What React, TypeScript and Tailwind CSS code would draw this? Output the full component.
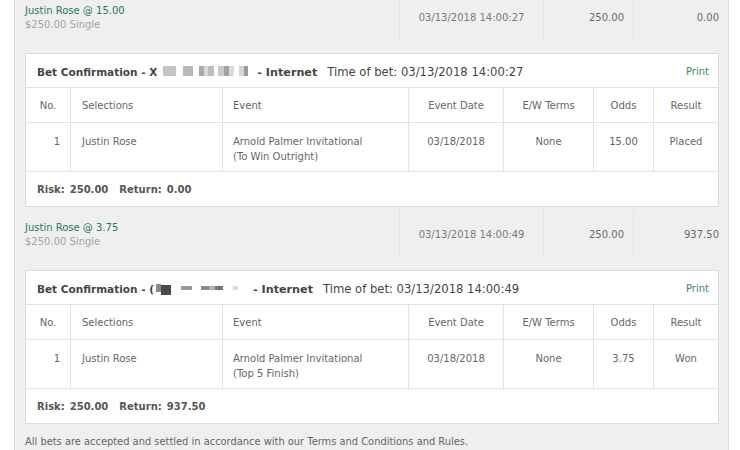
import React from 'react'

type Bet = {
  odds: string
  placed: string
  stake: string
  ret: string
  eventLine: string
  result: string
  redact: React.ReactNode
}

const COLS = 'grid grid-cols-[45px_152px_186px_95px_90px_60px_64px]'

function RedactA() {
  return (
    <span className="inline-flex items-center gap-0 align-middle">
      <span className="ml-[6px] inline-block h-[10px] w-[13px] bg-[#c4c4c4]" />
      <span className="ml-[7px] inline-block h-[10px] w-[10px] bg-[#b8b8b8]" />
      <span className="ml-[6px] inline-block h-[10px] w-[5px] bg-[#a9a9a9]" />
      <span className="inline-block h-[10px] w-[4px] bg-[#d8d8d8]" />
      <span className="inline-block h-[10px] w-[6px] bg-[#bdbdbd]" />
      <span className="ml-[4px] inline-block h-[10px] w-[6px] bg-[#c9c9c9]" />
      <span className="inline-block h-[10px] w-[5px] bg-[#a2a2a2]" />
      <span className="inline-block h-[10px] w-[5px] bg-[#dadada]" />
      <span className="ml-[5px] inline-block h-[10px] w-[5px] bg-[#d6d6d6]" />
      <span className="inline-block h-[10px] w-[4px] bg-[#9c9c9c]" />
      <span className="ml-[9px]" />
    </span>
  )
}

function RedactB() {
  return (
    <span className="inline-flex items-center align-middle">
      <span className="ml-[2px] inline-block h-[8px] w-[5px] bg-[#8a8a8a]" />
      <span className="inline-block h-[10px] w-[10px] translate-y-[2px] bg-[#4a4a4a]" />
      <span className="ml-[10px] inline-block h-[4px] w-[11px] bg-[#9a9a9a]" />
      <span className="ml-[9px] inline-block h-[4px] w-[8px] bg-[#8a8a8a]" />
      <span className="inline-block h-[4px] w-[6px] bg-[#b0b0b0]" />
      <span className="inline-block h-[4px] w-[8px] bg-[#777]" />
      <span className="ml-[10px] inline-block h-[4px] w-[5px] bg-[#d4dbe4]" />
      <span className="ml-[15px]" />
    </span>
  )
}

function BetPanel({ bet, first }: { bet: Bet; first?: boolean }) {
  return (
    <div
      className={`w-[715px] border-x border-[#d9d9d9] bg-[#efefef] ${first ? '-mt-[7px] pb-[3px]' : 'pb-[6px]'}`}
    >
      {/* summary row */}
      <div className="flex h-[48px] text-[10px]">
        <div className="w-[384px] pl-[10px] pt-[11px] leading-[14px]">
          <div className="text-[#1f7a62]">Justin Rose @ {bet.odds}</div>
          <div className="text-[#a5a5a5]">$250.00 Single</div>
        </div>
        <div className="w-[144px] border-l border-[#e2e2e2] pt-[18px] text-center leading-[14px] text-[#7a7a7a]">
          {bet.placed}
        </div>
        <div className="w-[90px] border-l border-[#e2e2e2] pr-[9px] pt-[18px] text-right leading-[14px] text-[#6a6a6a]">
          {bet.stake}
        </div>
        <div className="flex-1 border-l border-[#e2e2e2] pr-[9px] pt-[18px] text-right leading-[14px] text-[#6a6a6a]">
          {bet.ret}
        </div>
      </div>

      {/* confirmation box */}
      <div className="ml-[10px] mt-[12px] w-[694px] border border-[#dcdcdc] bg-white">
        <div className="flex h-[34px] items-center justify-between border-b border-[#e2e2e2] pl-[11px] pr-[9px]">
          <div className="whitespace-nowrap text-[#444]">
            <span className="text-[10.5px] font-bold">Bet Confirmation - {first ? 'X' : '('}</span>
            {bet.redact}
            <span className="text-[11.2px] font-bold">- Internet</span>
            <span className="ml-[10px] text-[11.6px]">Time of bet: {bet.placed}</span>
          </div>
          <div className="pt-[1px] text-[10px] text-[#3c8a5a]">Print</div>
        </div>

        <div className={`${COLS} h-[35px] border-b border-[#e2e2e2] text-[10px] leading-[15px] text-[#666]`}>
          <div className="flex items-center justify-center border-r border-[#e2e2e2]">No.</div>
          <div className="flex items-center border-r border-[#e2e2e2] pl-[11px]">Selections</div>
          <div className="flex items-center border-r border-[#e2e2e2] pl-[10px]">Event</div>
          <div className="flex items-center justify-center border-r border-[#e2e2e2]">Event Date</div>
          <div className="flex items-center justify-center border-r border-[#e2e2e2]">E/W Terms</div>
          <div className="flex items-center justify-center border-r border-[#e2e2e2]">Odds</div>
          <div className="flex items-center justify-center">Result</div>
        </div>

        <div className={`${COLS} h-[49px] border-b border-[#e2e2e2] text-[10px] leading-[15px] text-[#666]`}>
          <div className="border-r border-[#e2e2e2] pr-[10px] pt-[11px] text-right">1</div>
          <div className="border-r border-[#e2e2e2] pl-[11px] pt-[11px]">Justin Rose</div>
          <div className="border-r border-[#e2e2e2] pl-[10px] pt-[11px]">
            Arnold Palmer Invitational
            <br />
            {bet.eventLine}
          </div>
          <div className="border-r border-[#e2e2e2] pt-[11px] text-center">03/18/2018</div>
          <div className="border-r border-[#e2e2e2] pt-[11px] text-center">None</div>
          <div className="border-r border-[#e2e2e2] pt-[11px] text-center">{bet.odds}</div>
          <div className="pt-[11px] text-center">{bet.result}</div>
        </div>

        <div className="flex h-[34px] items-center pl-[11px] text-[10px] font-bold text-[#555]">
          <span>Risk:</span>
          <span className="ml-[5px]">{bet.stake}</span>
          <span className="ml-[11px]">Return:</span>
          <span className="ml-[5px]">{bet.ret}</span>
        </div>
      </div>
      {!first && (
        <p className="ml-[10px] mt-[10px] text-[9.9px] leading-[16px] text-[#666]">
          All bets are accepted and settled in accordance with our Terms and Conditions and Rules.
        </p>
      )}
    </div>
  )
}

export default function App() {
  const bets: Bet[] = [
    {
      odds: '15.00',
      placed: '03/13/2018 14:00:27',
      stake: '250.00',
      ret: '0.00',
      eventLine: '(To Win Outright)',
      result: 'Placed',
      redact: <RedactA />,
    },
    {
      odds: '3.75',
      placed: '03/13/2018 14:00:49',
      stake: '250.00',
      ret: '937.50',
      eventLine: '(Top 5 Finish)',
      result: 'Won',
      redact: <RedactB />,
    },
  ]

  return (
    <div
      className="h-[450px] w-[740px] overflow-hidden bg-white pl-[14px]"
      style={{ fontFamily: '"DejaVu Sans", Verdana, sans-serif' }}
    >
      <BetPanel bet={bets[0]} first />
      <BetPanel bet={bets[1]} />
    </div>
  )
}
